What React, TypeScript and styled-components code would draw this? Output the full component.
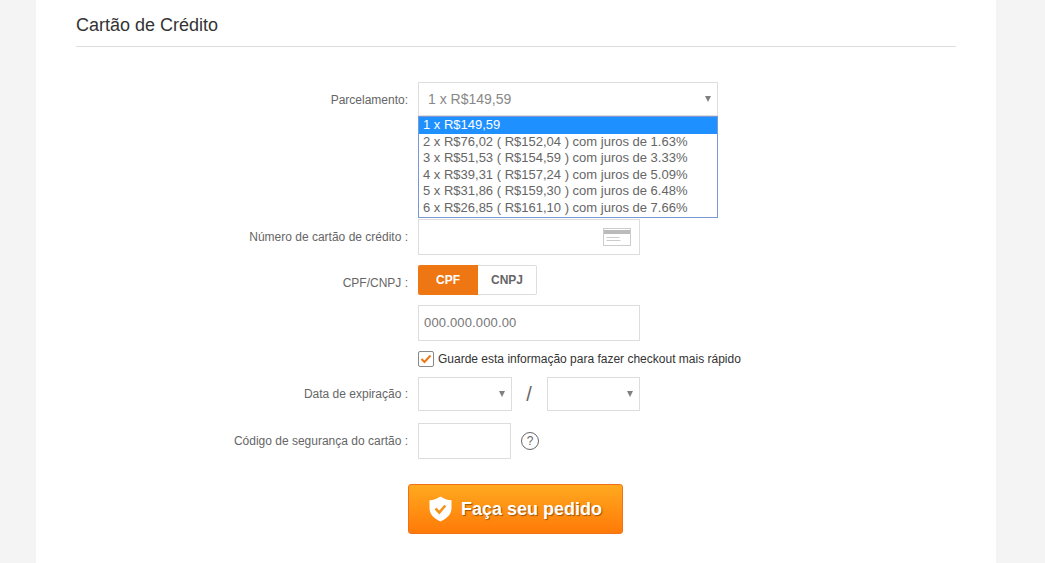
import React from 'react';
import styled, { createGlobalStyle } from 'styled-components';

const GlobalStyle = createGlobalStyle`
  html, body {
    margin: 0;
    padding: 0;
    height: 563px;
    overflow: hidden;
    background: #f4f4f4;
    font-family: "Liberation Sans", Arial, sans-serif;
  }
`;

const Card = styled.main`
  width: 960px;
  height: 563px;
  margin-left: 36px;
  padding: 0 40px;
  box-sizing: border-box;
  background: #fff;
`;

const Title = styled.h2`
  margin: 0 0 35px;
  height: 46px;
  line-height: 50px;
  font-size: 18px;
  font-weight: 400;
  color: #333;
  border-bottom: 1px solid #ddd;
`;

const Row = styled.div<{ $top?: number }>`
  display: flex;
  align-items: center;
  margin-top: ${(p) => p.$top ?? 10}px;
`;

const Label = styled.label<{ $drop?: number }>`
  width: 332px;
  margin-right: 10px;
  padding-top: ${(p) => p.$drop ?? 0}px;
  flex: none;
  text-align: right;
  font-size: 12px;
  color: #666;
`;

const SelectBox = styled.div<{ $width: number }>`
  position: relative;
  width: ${(p) => p.$width}px;
  height: 34px;
  padding: 0 9px;
  box-sizing: border-box;
  display: flex;
  align-items: center;
  font-size: 14px;
  color: #888;
  background: #fff;
  border: 1px solid #ddd;
  &::after {
    content: '';
    position: absolute;
    right: 6px;
    top: 13px;
    border-left: 3px solid transparent;
    border-right: 3px solid transparent;
    border-top: 6px solid #808080;
  }
`;

const OptionList = styled.ul`
  position: absolute;
  left: -1px;
  top: 33px;
  width: 300px;
  height: 102px;
  margin: 0;
  padding: 0;
  box-sizing: border-box;
  list-style: none;
  background: #fff;
  border: 1px solid #7a98d6;
  z-index: 2;
`;

const Option = styled.li<{ $active?: boolean }>`
  height: 16.6px;
  line-height: 16px;
  padding-left: 4px;
  font-size: 13px;
  white-space: nowrap;
  color: ${(p) => (p.$active ? '#fff' : '#666')};
  background: ${(p) => (p.$active ? '#1e90ff' : 'transparent')};
`;

const InputBox = styled.div<{ $width: number }>`
  position: relative;
  width: ${(p) => p.$width}px;
  height: 36px;
  padding: 0 5px 2px;
  box-sizing: border-box;
  display: flex;
  align-items: center;
  font-size: 13px;
  letter-spacing: 0.15px;
  color: #777;
  border: 1px solid #ddd;
`;

const CardGlyph = styled.svg`
  position: absolute;
  right: 8px;
  top: 8px;
`;

const Toggle = styled.div`
  display: flex;
  height: 30px;
`;

const ToggleButton = styled.button<{ $active?: boolean }>`
  width: ${(p) => (p.$active ? 60 : 59)}px;
  height: 30px;
  padding: 0;
  font-family: inherit;
  font-size: 12px;
  font-weight: 700;
  color: ${(p) => (p.$active ? '#fff' : '#666')};
  background: ${(p) => (p.$active ? '#ef7713' : '#fff')};
  border: ${(p) => (p.$active ? 'none' : '1px solid #ddd')};
  border-left: none;
  border-radius: ${(p) => (p.$active ? '2px 0 0 2px' : '0 2px 2px 0')};
`;

const CheckBox = styled.span`
  width: 16px;
  height: 16px;
  margin-right: 4px;
  box-sizing: border-box;
  display: flex;
  align-items: center;
  justify-content: center;
  border: 1px solid #888;
  border-radius: 2px;
`;

const CheckText = styled.span`
  font-size: 12px;
  color: #333;
`;

const Slash = styled.span`
  width: 35px;
  padding-right: 1px;
  box-sizing: border-box;
  text-align: center;
  font-size: 20px;
  font-weight: 400;
  color: #666;
`;

const HelpMark = styled.span`
  width: 18px;
  height: 18px;
  margin-left: 10px;
  box-sizing: border-box;
  display: flex;
  align-items: center;
  justify-content: center;
  font-size: 12px;
  color: #666;
  border: 1px solid #666;
  border-radius: 50%;
`;

const SubmitRow = styled.div`
  display: flex;
  margin: 25px 0 0 332px;
`;

const SubmitButton = styled.button`
  width: 215px;
  height: 50px;
  padding: 0;
  display: flex;
  align-items: center;
  justify-content: center;
  gap: 9px;
  font-family: inherit;
  font-size: 18px;
  font-weight: 700;
  color: #fff;
  text-shadow: 1px 1px 1px rgba(130, 70, 0, 0.8);
  background: linear-gradient(#ffa91f, #ff7a08);
  border: 1px solid #f0711a;
  border-radius: 3px;
`;

const options = [
  '1 x R$149,59',
  '2 x R$76,02 ( R$152,04 ) com juros de 1.63%',
  '3 x R$51,53 ( R$154,59 ) com juros de 3.33%',
  '4 x R$39,31 ( R$157,24 ) com juros de 5.09%',
  '5 x R$31,86 ( R$159,30 ) com juros de 6.48%',
  '6 x R$26,85 ( R$161,10 ) com juros de 7.66%',
];

const App: React.FC = () => (
  <>
    <GlobalStyle />
    <Card>
      <Title>Cartão de Crédito</Title>
      <Row $top={0}>
        <Label $drop={2}>Parcelamento:</Label>
        <SelectBox $width={300}>
          1 x R$149,59
          <OptionList>
            {options.map((o, i) => (
              <Option key={o} $active={i === 0}>{o}</Option>
            ))}
          </OptionList>
        </SelectBox>
      </Row>
      <Row $top={103}>
        <Label>Número de cartão de crédito :</Label>
        <InputBox $width={222}>
          <CardGlyph width="28" height="18" viewBox="0 0 28 18" fill="none">
            <rect x="0.5" y="0.5" width="27" height="17" fill="#fff" stroke="#ccc" />
            <rect x="1" y="2" width="26" height="4" fill="#bbb" />
            <path d="M3.500 9.500h13M3.500 12.500h14" stroke="#ccc" />
          </CardGlyph>
        </InputBox>
      </Row>
      <Row>
        <Label $drop={6}>CPF/CNPJ :</Label>
        <Toggle>
          <ToggleButton $active>CPF</ToggleButton>
          <ToggleButton>CNPJ</ToggleButton>
        </Toggle>
      </Row>
      <Row>
        <Label />
        <InputBox $width={222}>000.000.000.00</InputBox>
      </Row>
      <Row>
        <Label />
        <CheckBox>
          <svg width="12" height="10" viewBox="0 0 12 10" fill="none">
            <path d="M1.500 5l3 3 6-6.500" stroke="#ef7713" strokeWidth="2" />
          </svg>
        </CheckBox>
        <CheckText>Guarde esta informação para fazer checkout mais rápido</CheckText>
      </Row>
      <Row>
        <Label>Data de expiração :</Label>
        <SelectBox $width={94} />
        <Slash>/</Slash>
        <SelectBox $width={93} />
      </Row>
      <Row $top={12}>
        <Label>Código de segurança do cartão :</Label>
        <InputBox $width={93} />
        <HelpMark>?</HelpMark>
      </Row>
      <SubmitRow>
        <SubmitButton>
          <svg width="23" height="26" viewBox="0 0 23 26">
            <path d="M11.500 0.500C15 3 18.500 4 22.500 4.200V12c0 6.500-4.500 10.500-11 13.500C5 22.500 0.500 18.500 0.500 12V4.200C4.500 4 8 3 11.500 0.500z" fill="#fff" />
            <path d="M6.500 12.500l3.800 4 6-7" fill="none" stroke="#f5941d" strokeWidth="2.600" />
          </svg>
          Faça seu pedido
        </SubmitButton>
      </SubmitRow>
    </Card>
  </>
);

export default App;
